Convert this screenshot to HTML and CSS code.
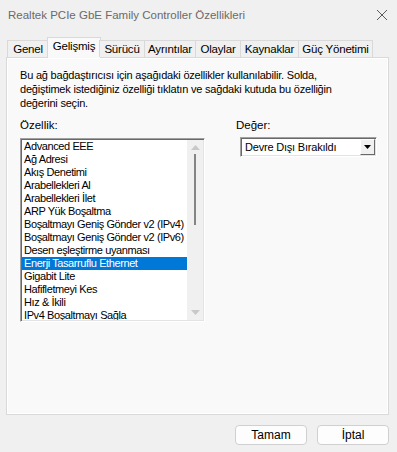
FILE: index.html
```html
<!DOCTYPE html>
<html>
<head>
    <link rel="stylesheet" href="styles.css">
    <title>Realtek PCIe GbE Family Controller Özellikleri</title>
</head>
<body>
<div class="window">
    <div class="titlebar">
        <span class="title">Realtek PCIe GbE Family Controller Özellikleri</span>
        <svg class="close" width="12" height="12" viewBox="0 0 12 12">
            <path d="M1 1 L11 11 M11 1 L1 11" stroke="#5a5a5a" stroke-width="1" fill="none"/>
        </svg>
    </div>

    <div class="tabs">
        <div class="tab tab-genel">Genel</div>
        <div class="tab tab-gelismis active">Gelişmiş</div>
        <div class="tab tab-surucu">Sürücü</div>
        <div class="tab tab-ayrintilar">Ayrıntılar</div>
        <div class="tab tab-olaylar">Olaylar</div>
        <div class="tab tab-kaynaklar">Kaynaklar</div>
        <div class="tab tab-guc">Güç Yönetimi</div>
    </div>

    <div class="panel">
        <p class="intro">Bu ağ bağdaştırıcısı için aşağıdaki özellikler kullanılabilir. Solda, değiştimek istediğiniz özelliği tıklatın ve sağdaki kutuda bu özelliğin değerini seçin.</p>

        <div class="columns">
            <div class="col-left">
                <div class="label">Özellik:</div>
                <div class="listbox">
                    <ul class="items">
                        <li>Advanced EEE</li>
                        <li>Ağ Adresi</li>
                        <li>Akış Denetimi</li>
                        <li>Arabellekleri Al</li>
                        <li>Arabellekleri İlet</li>
                        <li>ARP Yük Boşaltma</li>
                        <li>Boşaltmayı Geniş Gönder v2 (IPv4)</li>
                        <li>Boşaltmayı Geniş Gönder v2 (IPv6)</li>
                        <li>Desen eşleştirme uyanması</li>
                        <li class="selected">Enerji Tasarruflu Ethernet</li>
                        <li>Gigabit Lite</li>
                        <li>Hafifletmeyi Kes</li>
                        <li>Hız &amp; İkili</li>
                        <li>IPv4 Boşaltmayı Sağla</li>
                    </ul>
                    <div class="scrollbar">
                        <svg class="arrow" width="9" height="5" viewBox="0 0 9 5"><path d="M0 5 L4.5 0 L9 5 Z" fill="#c8c8c8"/></svg>
                        <div class="track"><div class="thumb"></div></div>
                        <svg class="arrow" width="9" height="5" viewBox="0 0 9 5"><path d="M0 0 L4.5 5 L9 0 Z" fill="#c8c8c8"/></svg>
                    </div>
                </div>
            </div>

            <div class="col-right">
                <div class="label">Değer:</div>
                <div class="combo">
                    <span class="combo-text">Devre Dışı Bırakıldı</span>
                    <span class="combo-btn">
                        <svg width="7" height="4" viewBox="0 0 7 4"><path d="M0 0 L7 0 L3.5 4 Z" fill="#000"/></svg>
                    </span>
                </div>
            </div>
        </div>
    </div>

    <div class="buttons">
        <button class="btn">Tamam</button>
        <button class="btn">İptal</button>
    </div>
</div>
</body>
</html>
```

FILE: styles.css
```css
body, html {
    margin: 0;
    padding: 0;
    height: 100%;
    background-color: #f0f0f0;
    font-family: "Liberation Sans", Arial, sans-serif;
    font-size: 11.5px;
    color: #000;
}

.window {
    width: 397px;
    height: 452px;
    display: flex;
    flex-direction: column;
}

.titlebar {
    height: 30px;
    display: flex;
    align-items: center;
    justify-content: space-between;
    padding: 0 9px 0 8px;
    color: #6a6a6a;
}

.title {
    font-size: 11.5px;
}

.tabs {
    display: flex;
    margin: 7px 0 0 7px;
    height: 20px;
    align-items: flex-end;
    position: relative;
    z-index: 1;
}

.tab {
    height: 17px;
    line-height: 17px;
    padding: 0;
    text-align: center;
    border: 1px solid #d9d9d9;
    border-bottom: none;
    margin-right: -1px;
    background-color: #f0f0f0;
    box-sizing: border-box;
    white-space: nowrap;
    letter-spacing: -0.2px;
}

.tab.active {
    height: 21px;
    line-height: 17px;
    margin-bottom: -1px;
    padding-bottom: 4px;
    background-color: #f9f9f9;
    margin-left: -1px;
    margin-right: -2px;
}

/* tab widths as in the dialog */
.tab-genel { width: 42px; }
.tab-gelismis { width: 54px; }
.tab-surucu { width: 46px; }
.tab-ayrintilar { width: 52px; }
.tab-olaylar { width: 46px; }
.tab-kaynaklar { width: 59px; }
.tab-guc { width: 75px; }

.panel {
    margin: 0 8px 0 6px;
    height: 358px;
    box-sizing: border-box;
    border: 1px solid #d9d9d9;
    box-shadow: inset 1px 1px 0 #fff, inset -1px -1px 0 #fff;
    background-color: #f9f9f9;
    padding: 10px 10px 0 13px;
}

.intro {
    margin: 0;
    line-height: 14px;
    width: 330px;
    font-size: 11px;
    letter-spacing: -0.2px;
}

.columns {
    display: flex;
    margin-top: 8px;
}

.label {
    line-height: 14px;
    height: 14px;
}

.col-left .label {
    margin-bottom: 6px;
}

.col-right {
    margin-left: 31px;
}

.col-right .label {
    margin-bottom: 5px;
}

.listbox {
    width: 185px;
    height: 184px;
    box-sizing: border-box;
    border: 1px solid;
    border-color: #a0a0a0 #fff #fff #a0a0a0;
    box-shadow: inset 1px 1px 0 #696969, inset -1px -1px 0 #e3e3e3;
    background-color: #fff;
    display: flex;
    padding: 1px;
}

.items {
    list-style: none;
    margin: 0;
    padding: 0;
    flex: 1;
    overflow: hidden;
    font-size: 11px;
    letter-spacing: -0.4px;
}

.items li {
    height: 13px;
    line-height: 13px;
    padding-left: 2px;
    white-space: nowrap;
}

.items li.selected {
    background-color: #0078d7;
    color: #fff;
}

.scrollbar {
    width: 16px;
    background-color: #f0f0f0;
    display: flex;
    flex-direction: column;
    align-items: center;
    padding: 5px 0;
    box-sizing: border-box;
}

.arrow {
    flex: none;
}

.track {
    flex: 1;
    width: 100%;
    display: flex;
    justify-content: center;
    padding-top: 4px;
}

.thumb {
    width: 2px;
    height: 71px;
    background-color: #858585;
}

.combo {
    width: 137px;
    height: 20px;
    box-sizing: border-box;
    border: 1px solid;
    border-color: #a0a0a0 #fff #fff #a0a0a0;
    box-shadow: inset 1px 1px 0 #696969, inset -1px -1px 0 #e3e3e3;
    background-color: #fff;
    display: flex;
    align-items: center;
    padding: 1px;
    font-size: 11px;
    letter-spacing: -0.2px;
    margin-left: 4px;
}

.combo-text {
    flex: 1;
    padding-left: 3px;
}

.combo-btn {
    width: 15px;
    height: 16px;
    box-sizing: border-box;
    background-color: #f0f0f0;
    border: 1px solid;
    border-color: #fff #696969 #696969 #fff;
    display: flex;
    align-items: center;
    justify-content: center;
}

.buttons {
    display: flex;
    justify-content: flex-end;
    gap: 10px;
    padding: 10px 8px 0 0;
}

.btn {
    width: 72px;
    height: 20px;
    font-family: "Liberation Sans", Arial, sans-serif;
    font-size: 12px;
    color: #000;
    background-color: #fdfdfd;
    border: 1px solid #d0d0d0;
    border-radius: 4px;
    padding: 0;
}
```
